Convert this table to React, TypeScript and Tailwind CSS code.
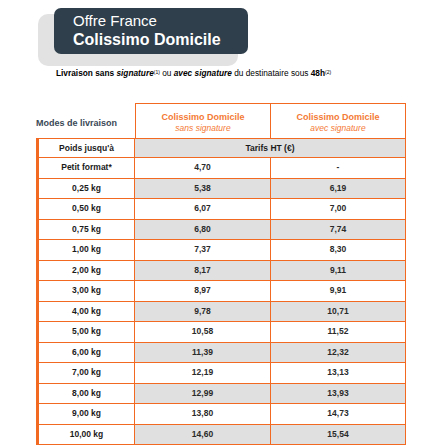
import React from 'react';

type Row = { poids: string; sans: string; avec: string };

const rows: Row[] = [
    { poids: "Petit format*", sans: "4,70", avec: "-" },
    { poids: "0,25 kg", sans: "5,38", avec: "6,19" },
    { poids: "0,50 kg", sans: "6,07", avec: "7,00" },
    { poids: "0,75 kg", sans: "6,80", avec: "7,74" },
    { poids: "1,00 kg", sans: "7,37", avec: "8,30" },
    { poids: "2,00 kg", sans: "8,17", avec: "9,11" },
    { poids: "3,00 kg", sans: "8,97", avec: "9,91" },
    { poids: "4,00 kg", sans: "9,78", avec: "10,71" },
    { poids: "5,00 kg", sans: "10,58", avec: "11,52" },
    { poids: "6,00 kg", sans: "11,39", avec: "12,32" },
    { poids: "7,00 kg", sans: "12,19", avec: "13,13" },
    { poids: "8,00 kg", sans: "12,99", avec: "13,93" },
    { poids: "9,00 kg", sans: "13,80", avec: "14,73" },
    { poids: "10,00 kg", sans: "14,60", avec: "15,54" },
];

const App: React.FC = () => {
    return (
        <div className="w-[442px] h-[446px] overflow-hidden bg-white pt-[8px] font-['Liberation_Sans',Arial,sans-serif] text-[#1b1b1b]">
            {/* Title block */}
            <div className="ml-[54px] w-[194px] h-[46px] rounded-[7px] bg-[#2f3f4c] pl-[19px] pt-[4px] text-white shadow-[-13px_9px_0_3px_#e1e2e1]">
                <div className="text-[15px] leading-[18px]">Offre France</div>
                <div className="text-[16px] leading-[19px] font-bold">Colissimo Domicile</div>
            </div>

            <p className="ml-[56px] mt-[14px] text-[8.3px] leading-[10px] text-black whitespace-nowrap">
                <b>Livraison sans </b><b className="italic">signature</b><sup className="text-[5px]">(1)</sup> ou <b className="italic">avec signature</b> du destinataire sous <b>48h</b><sup className="text-[5px]">(2)</sup>
            </p>

            {/* Table */}
            <div className="ml-[36px] mt-[25px] w-[370px]">
                <div className="flex h-[35px]">
                    <div className="w-[99px] flex items-center pt-[6px] text-[9px] font-bold text-[#3a4856] whitespace-nowrap">
                        Modes de livraison
                    </div>
                    <div className="w-[136px] border-t border-l border-r border-[#f26a21] flex flex-col items-center justify-center pt-[2px]">
                        <span className="text-[9px] leading-[11px] font-bold text-[#f47a36]">Colissimo Domicile</span>
                        <span className="text-[8.5px] leading-[10px] italic text-[#f47a36]">sans signature</span>
                    </div>
                    <div className="w-[135px] border-t border-r border-[#f26a21] flex flex-col items-center justify-center pt-[2px]">
                        <span className="text-[9px] leading-[11px] font-bold text-[#f47a36]">Colissimo Domicile</span>
                        <span className="text-[8.5px] leading-[10px] italic text-[#f47a36]">avec signature</span>
                    </div>
                </div>

                <div className="flex h-[20px] border-t border-[#f26a21]">
                    <div className="w-[99px] border-l-[3px] border-r border-b border-[#f26a21] bg-white flex items-center justify-center text-[8.5px] font-bold">
                        Poids jusqu'à
                    </div>
                    <div className="w-[271px] border-r border-b border-[#f26a21] bg-[#dfe0df] flex items-center justify-center text-[8.5px] font-bold">
                        Tarifs HT (€)
                    </div>
                </div>

                {rows.map((r, i) => {
                    const fill = i % 2 === 1 ? "bg-[#dfe0df]" : "bg-white";
                    return (
                        <div key={r.poids} className="flex h-[20.5px]">
                            <div className="w-[99px] border-l-[3px] border-r border-b border-[#f26a21] bg-white flex items-center justify-center text-[8.5px] font-bold whitespace-nowrap">
                                {r.poids}
                            </div>
                            <div className={`w-[136px] border-r border-b border-[#f26a21] ${fill} flex items-center justify-center text-[8.5px] font-bold text-[#2a2a2a]`}>
                                {r.sans}
                            </div>
                            <div className={`w-[135px] border-r border-b border-[#f26a21] ${fill} flex items-center justify-center text-[8.5px] font-bold text-[#2a2a2a]`}>
                                {r.avec}
                            </div>
                        </div>
                    );
                })}
            </div>
        </div>
    );
};

export default App;
